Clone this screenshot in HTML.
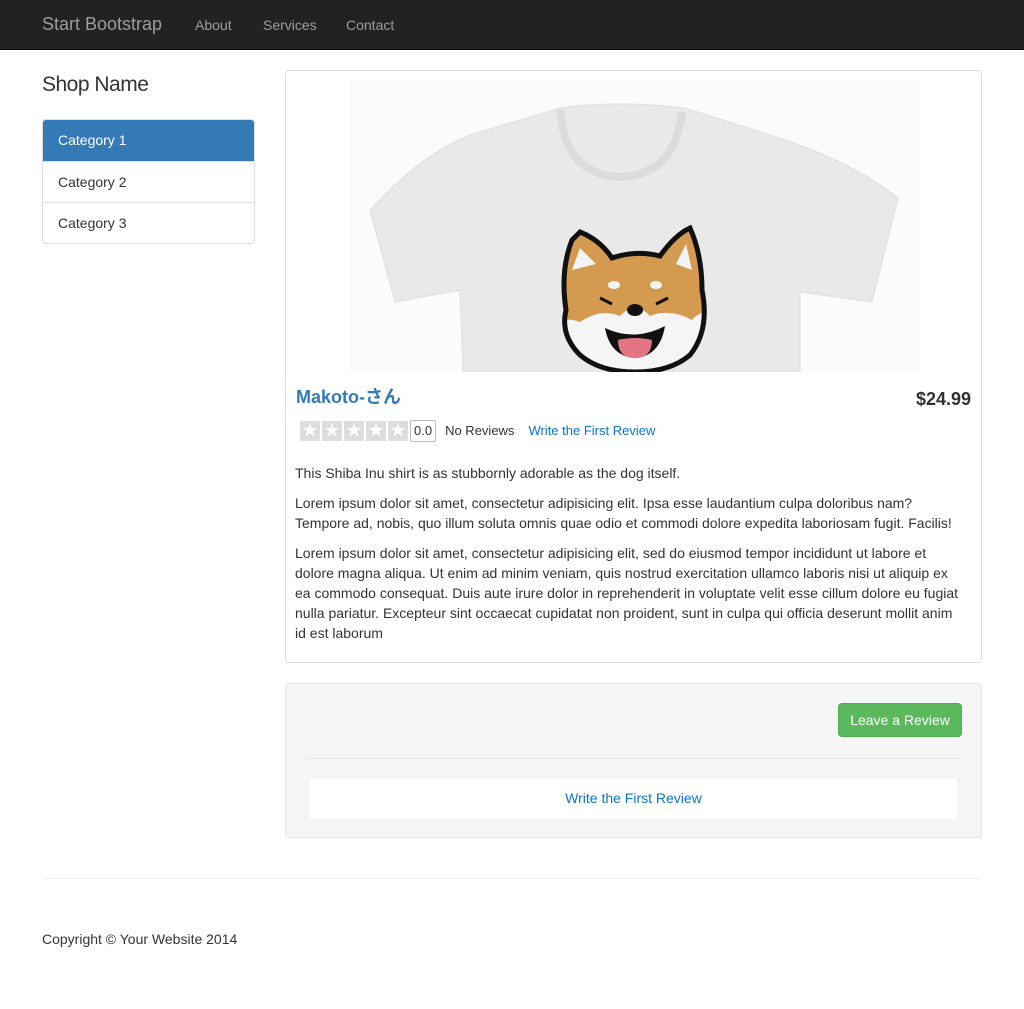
<!DOCTYPE html>
<html><head><meta charset="utf-8"><style>
*{box-sizing:border-box}
body{margin:0;font-family:"Liberation Sans","Noto Sans CJK JP",sans-serif;font-size:14px;line-height:20px;color:#333;background:#fff}
.nav{height:50px;background:#222;border-bottom:1px solid #080808;position:relative}
.nav span{position:absolute;top:15px;color:#9d9d9d;font-size:15px}
.brand{font-size:18px!important;top:14px!important}
.side{position:absolute;left:42px;top:70px;width:213px}
.side h1{font-size:21px;font-weight:normal;margin:1px 0 0;line-height:28px;color:#333;letter-spacing:-0.5px}
.lg{margin-top:20px;border:1px solid #ddd;border-radius:4px;overflow:hidden}
.lg div{height:41px;padding:10px 15px;border-top:1px solid #ddd}
.lg div:first-child{border-top:0;background:#337ab7;color:#fff}
.thumb{position:absolute;left:285px;top:70px;width:697px;height:593px;border:1px solid #ddd;border-radius:4px}
.well{position:absolute;left:285px;top:683px;width:697px;height:155px;border:1px solid #e3e3e3;border-radius:4px;background:#f5f5f5}
p{margin:0 0 10px}
i{width:20px;height:20px;background:#ddd;display:flex;align-items:center;justify-content:center;color:#fff;font-style:normal;font-size:15px}
</style></head><body>
<div class="nav">
<span class="brand" style="left:42px">Start Bootstrap</span>
<span style="left:195px;font-size:14px;top:15px">About</span>
<span style="left:263px;font-size:14px;top:15px">Services</span>
<span style="left:346px;font-size:14px;top:15px">Contact</span>
</div>
<div class="side"><h1>Shop Name</h1>
<div class="lg"><div>Category 1</div><div>Category 2</div><div>Category 3</div></div></div>
<div class="thumb">
<svg style="position:absolute;left:64px;top:9px" width="570" height="292" viewBox="0 0 570 292">
<defs><clipPath id="h"><path id="hp" d="M216 230 Q210 190 222 160 L230 152 Q250 160 262 178 Q285 170 310 176 Q325 155 340 148 Q352 175 352 210 Q360 250 340 275 Q320 292 285 292 Q250 292 230 275 Q210 255 216 230 Z"/></clipPath></defs>
<rect width="570" height="292" fill="#fbfbfb"/>
<path d="M210 28 Q268 20 335 28 L420 55 Q500 80 548 118 L522 222 L450 212 L450 292 L113 292 L110 210 L45 222 L20 130 Q70 75 120 55 Z" fill="#e9e9e9" stroke="#dedede"/>
<path d="M210 30 Q215 95 270 97 Q325 95 332 32" fill="none" stroke="#dcdcdc" stroke-width="8"/>
<g clip-path="url(#h)">
<rect x="200" y="140" width="170" height="160" fill="#f5f5f5"/>
<path d="M200 140 H370 V232 Q352 228 342 240 Q320 228 300 236 Q285 220 270 236 Q250 228 230 242 Q215 236 200 245 Z" fill="#d49a4f"/>
<path d="M222 190 L230 168 L246 184 Z M326 184 L336 164 L342 190 Z" fill="#f4f4f4"/>
<ellipse cx="264" cy="205" rx="6" ry="4" fill="#f4f4f4"/><ellipse cx="306" cy="205" rx="6" ry="4" fill="#f4f4f4"/>
</g>
<use href="#hp" fill="none" stroke="#111" stroke-width="5"/>
<path d="M250 218 L262 224 M318 218 L306 224" stroke="#111" stroke-width="3" fill="none"/>
<ellipse cx="285" cy="230" rx="8" ry="6" fill="#111"/>
<path d="M255 248 Q285 262 315 246 Q310 276 285 278 Q260 276 255 248Z" fill="#111"/>
<path d="M268 260 Q285 256 302 260 Q302 278 285 278 Q268 278 268 260Z" fill="#e27483"/>
</svg>
<div style="position:absolute;left:10px;top:316px;font-size:18px;font-weight:bold;color:#337ab7">Makoto-さん</div>
<div style="position:absolute;right:10px;top:318px;font-size:18px;font-weight:bold">$24.99</div>
<div style="position:absolute;left:14px;top:349px;display:flex;align-items:center">
<span style="display:inline-flex;gap:2px"><i>★</i><i>★</i><i>★</i><i>★</i><i>★</i></span>
<span style="border:1px solid #bbb;border-radius:2px;padding:0 3px;margin-left:2px;font-size:13px;height:22px;line-height:20px">0.0</span>
<span style="margin-left:9px;font-size:13px">No Reviews</span>
<span style="margin-left:14px;font-size:13px;color:#0a74c9">Write the First Review</span></div>
<div style="position:absolute;left:9px;top:392px;width:672px">
<p>This Shiba Inu shirt is as stubbornly adorable as the dog itself.</p>
<p>Lorem ipsum dolor sit amet, consectetur adipisicing elit. Ipsa esse laudantium culpa doloribus nam? Tempore ad, nobis, quo illum soluta omnis quae odio et commodi dolore expedita laboriosam fugit. Facilis!</p>
<p>Lorem ipsum dolor sit amet, consectetur adipisicing elit, sed do eiusmod tempor incididunt ut labore et dolore magna aliqua. Ut enim ad minim veniam, quis nostrud exercitation ullamco laboris nisi ut aliquip ex ea commodo consequat. Duis aute irure dolor in reprehenderit in voluptate velit esse cillum dolore eu fugiat nulla pariatur. Excepteur sint occaecat cupidatat non proident, sunt in culpa qui officia deserunt mollit anim id est laborum</p></div>
</div>
<div class="well">
<div style="position:absolute;left:552px;top:19px;width:124px;height:34px;background:#5cb85c;border:1px solid #4cae4c;border-radius:4px;color:#fff;text-align:center;line-height:32px">Leave a Review</div>
<div style="position:absolute;left:19px;right:19px;top:74px;border-top:1px solid #e8e8e8"></div>
<div style="position:absolute;left:24px;right:24px;top:94px;height:40px;background:#fff;text-align:center;line-height:40px;color:#0a74c9">Write the First Review</div>
</div>
<div style="position:absolute;left:42px;width:940px;top:878px;border-top:1px solid #eee"></div>
<div style="position:absolute;left:42px;top:929px">Copyright © Your Website 2014</div>
</body></html>
